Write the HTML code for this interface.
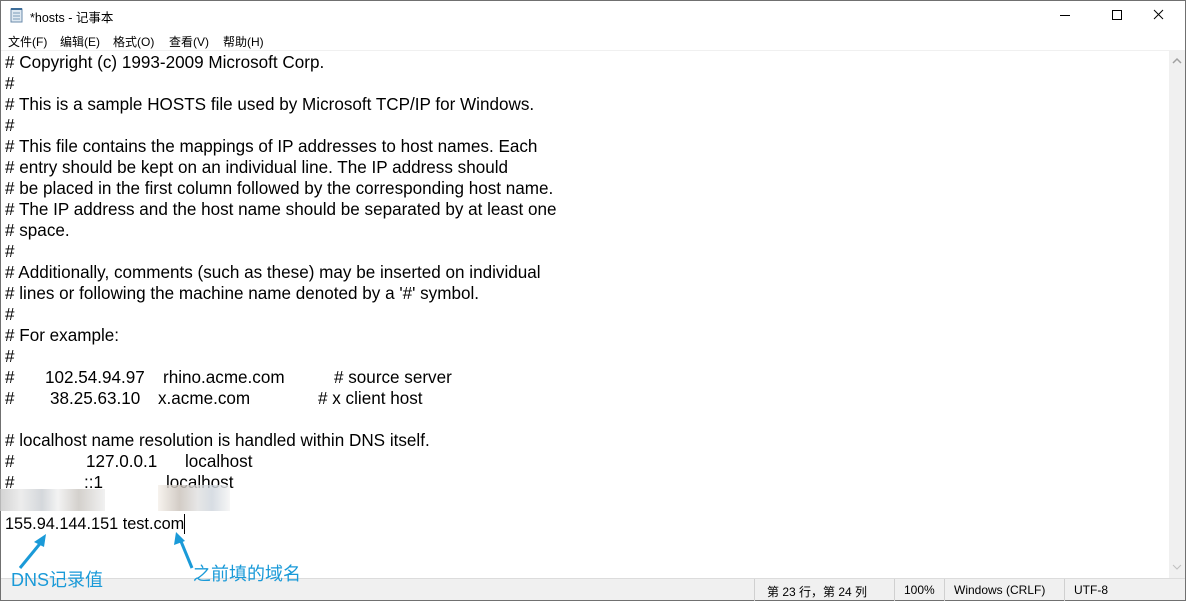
<!DOCTYPE html>
<html><head><meta charset="utf-8"><style>
*{margin:0;padding:0;box-sizing:border-box}
body{width:1186px;height:601px;overflow:hidden;background:#fff;font-family:"Liberation Sans","Noto Sans CJK SC",sans-serif;position:relative}
.win{position:absolute;left:0;top:0;width:1186px;height:601px;border:1px solid #707070;}
.title{position:absolute;left:30px;top:7px;font-size:12.5px;color:#000}
.menu{position:absolute;top:33px;font-size:12px;color:#000}
.ed{position:absolute;left:1px;top:50px;width:1168px;height:528px;border-top:1px solid #f0f0f0}
.l{position:absolute;left:5px;font-size:17.1px;color:#000;white-space:pre;line-height:21px}
.sb{position:absolute;left:1169px;top:50px;width:16px;height:528px;background:#f0f0f0}
.st{position:absolute;left:1px;top:578px;width:1184px;height:22px;background:#f0f0f0;border-top:1px solid #dcdcdc;font-size:12px}
.st span{position:absolute;top:4px}
.st i{position:absolute;top:0;width:1px;height:22px;background:#d0d0d0}
.blue{position:absolute;color:#1a9ad8;font-size:18px;z-index:5;line-height:20px}
</style></head><body>
<div class="win"></div>
<svg style="position:absolute;left:9px;top:7px" width="16" height="16"><rect x="2" y="2" width="11" height="13" fill="#dfe9f2" stroke="#6b8bab"/><path d="M4 6h7M4 9h7M4 12h7" stroke="#7a9ab8"/><path d="M2 2h11" stroke="#3d6d99" stroke-width="2"/></svg>
<div class="title">*hosts - 记事本</div>
<svg style="position:absolute;left:1060px;top:8px" width="120" height="16"><path d="M0 7.5h10" stroke="#000"/><rect x="52.5" y="2.5" width="9" height="9" fill="none" stroke="#000"/><path d="M94 2l9 9M103 2l-9 9" stroke="#000"/></svg>
<div class="menu" style="left:8px">文件(F)</div>
<div class="menu" style="left:60px">编辑(E)</div>
<div class="menu" style="left:113px">格式(O)</div>
<div class="menu" style="left:169px">查看(V)</div>
<div class="menu" style="left:223px">帮助(H)</div>
<div class="ed"></div>
<div class="l" style="top:52px"># Copyright (c) 1993-2009 Microsoft Corp.</div>
<div class="l" style="top:73px">#</div>
<div class="l" style="top:94px"># This is a sample HOSTS file used by Microsoft TCP/IP for Windows.</div>
<div class="l" style="top:115px">#</div>
<div class="l" style="top:136px"># This file contains the mappings of IP addresses to host names. Each</div>
<div class="l" style="top:157px"># entry should be kept on an individual line. The IP address should</div>
<div class="l" style="top:178px"># be placed in the first column followed by the corresponding host name.</div>
<div class="l" style="top:199px"># The IP address and the host name should be separated by at least one</div>
<div class="l" style="top:220px"># space.</div>
<div class="l" style="top:241px">#</div>
<div class="l" style="top:262px"># Additionally, comments (such as these) may be inserted on individual</div>
<div class="l" style="top:283px"># lines or following the machine name denoted by a '#' symbol.</div>
<div class="l" style="top:304px">#</div>
<div class="l" style="top:325px"># For example:</div>
<div class="l" style="top:346px">#</div>
<div class="l" style="top:367px">#</div><div class="l" style="top:367px;left:45px">102.54.94.97</div><div class="l" style="top:367px;left:163px">rhino.acme.com</div><div class="l" style="top:367px;left:334px"># source server</div>
<div class="l" style="top:388px">#</div><div class="l" style="top:388px;left:50px">38.25.63.10</div><div class="l" style="top:388px;left:158px">x.acme.com</div><div class="l" style="top:388px;left:318px"># x client host</div>
<div class="l" style="top:430px"># localhost name resolution is handled within DNS itself.</div>
<div class="l" style="top:451px">#</div><div class="l" style="top:451px;left:86px">127.0.0.1</div><div class="l" style="top:451px;left:185px">localhost</div>
<div class="l" style="top:472px">#</div><div class="l" style="top:472px;left:84px">::1</div><div class="l" style="top:472px;left:166px">localhost</div>
<div style="position:absolute;left:0;top:489px;width:105px;height:22px;background:linear-gradient(90deg,#c8c8c8,#e8e8e8 20%,#c9cdd2 40%,#f0f0f0 55%,#c9c5c0 75%,#eee);opacity:.8"></div>
<div style="position:absolute;left:158px;top:485px;width:72px;height:26px;background:linear-gradient(90deg,#f5f0ea,#c8c0b8 30%,#e0e0e0 55%,#cdd4dc 75%,#f4f4f4);opacity:.8"></div>
<div class="l" style="top:514px;font-size:16.3px">155.94.144.151 test.com<span style="display:inline-block;width:1px;height:20px;background:#000;vertical-align:-5px"></span></div>
<svg style="position:absolute;left:10px;top:530px" width="200" height="45"><path d="M10 38L33 10" stroke="#1a9ad8" stroke-width="3"/><path d="M36 4L24 12L34 17Z" fill="#1a9ad8"/><path d="M182 38L170 9" stroke="#1a9ad8" stroke-width="3"/><path d="M166 2L164 15L175 11Z" fill="#1a9ad8"/></svg>
<div class="sb"><svg width="16" height="528"><path d="M4 13l4-4 4 4" stroke="#a0a0a0" fill="none" stroke-width="1.5"/><path d="M4 515l4 4 4-4" stroke="#c0c0c0" fill="none"/></svg></div>
<div class="st"><i style="left:753px"></i><span style="left:766px">第 23 行，第 24 列</span><i style="left:893px"></i><span style="left:903px">100%</span><i style="left:943px"></i><span style="left:953px">Windows (CRLF)</span><i style="left:1063px"></i><span style="left:1073px">UTF-8</span></div>
<div class="blue" style="left:11px;top:570px">DNS记录值</div>
<div class="blue" style="left:193px;top:564px">之前填的域名</div>
</body></html>
